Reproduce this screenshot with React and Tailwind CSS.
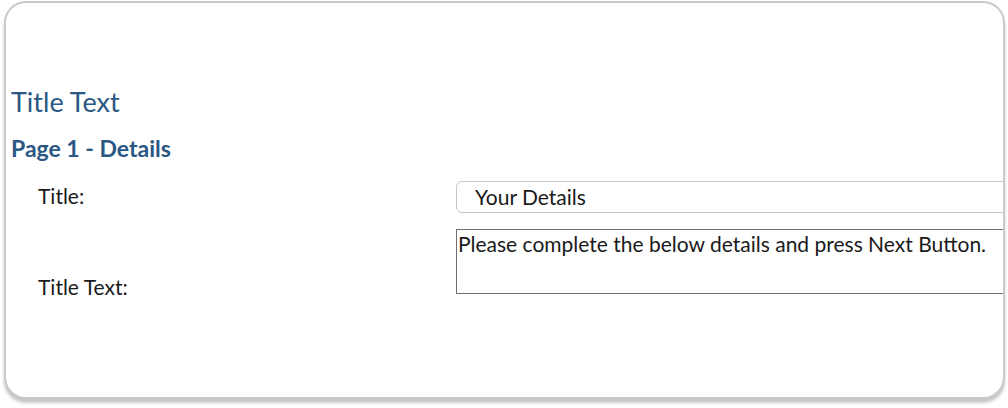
export default function App() {
  return (
    <div className="w-[1008px] h-[408px] bg-white pt-px pl-1" style={{ fontFamily: "Lato, 'Open Sans', sans-serif" }}>
      <div className="w-[1001px] h-[398px] border-2 border-[#c9c9c9] rounded-[22px] bg-white overflow-hidden shadow-[0_4px_3px_rgba(0,0,0,0.22)]">
        <div className="pl-[5px] pt-[83px]">
          <div className="text-[27px] leading-[32px] text-[#2b5784]">Title Text</div>
          <div className="mt-[16px] text-[23px] leading-[28px] font-bold text-[#2b5784]">Page 1 - Details</div>
          <div className="mt-[19px] grid grid-cols-[445px_1000px] gap-y-[16px] text-[21px] text-[#1a1a1a]">
            <div className="pl-[27px] flex items-center h-[32px] pb-[2px]">Title:</div>
            <div className="h-[32px] w-[1000px] border border-[#c6c6c6] rounded-[6px] pl-[18px] flex items-center">Your Details</div>
            <div className="pl-[27px] h-[65px] leading-[26px] pt-[45px] whitespace-nowrap">Title Text:</div>
            <div className="h-[65px] w-[1000px] border border-[#6e6e6e] pl-[1px] pt-px leading-[26px]">Please complete the below details and press Next Button.</div>
          </div>
        </div>
      </div>
    </div>
  );
}
